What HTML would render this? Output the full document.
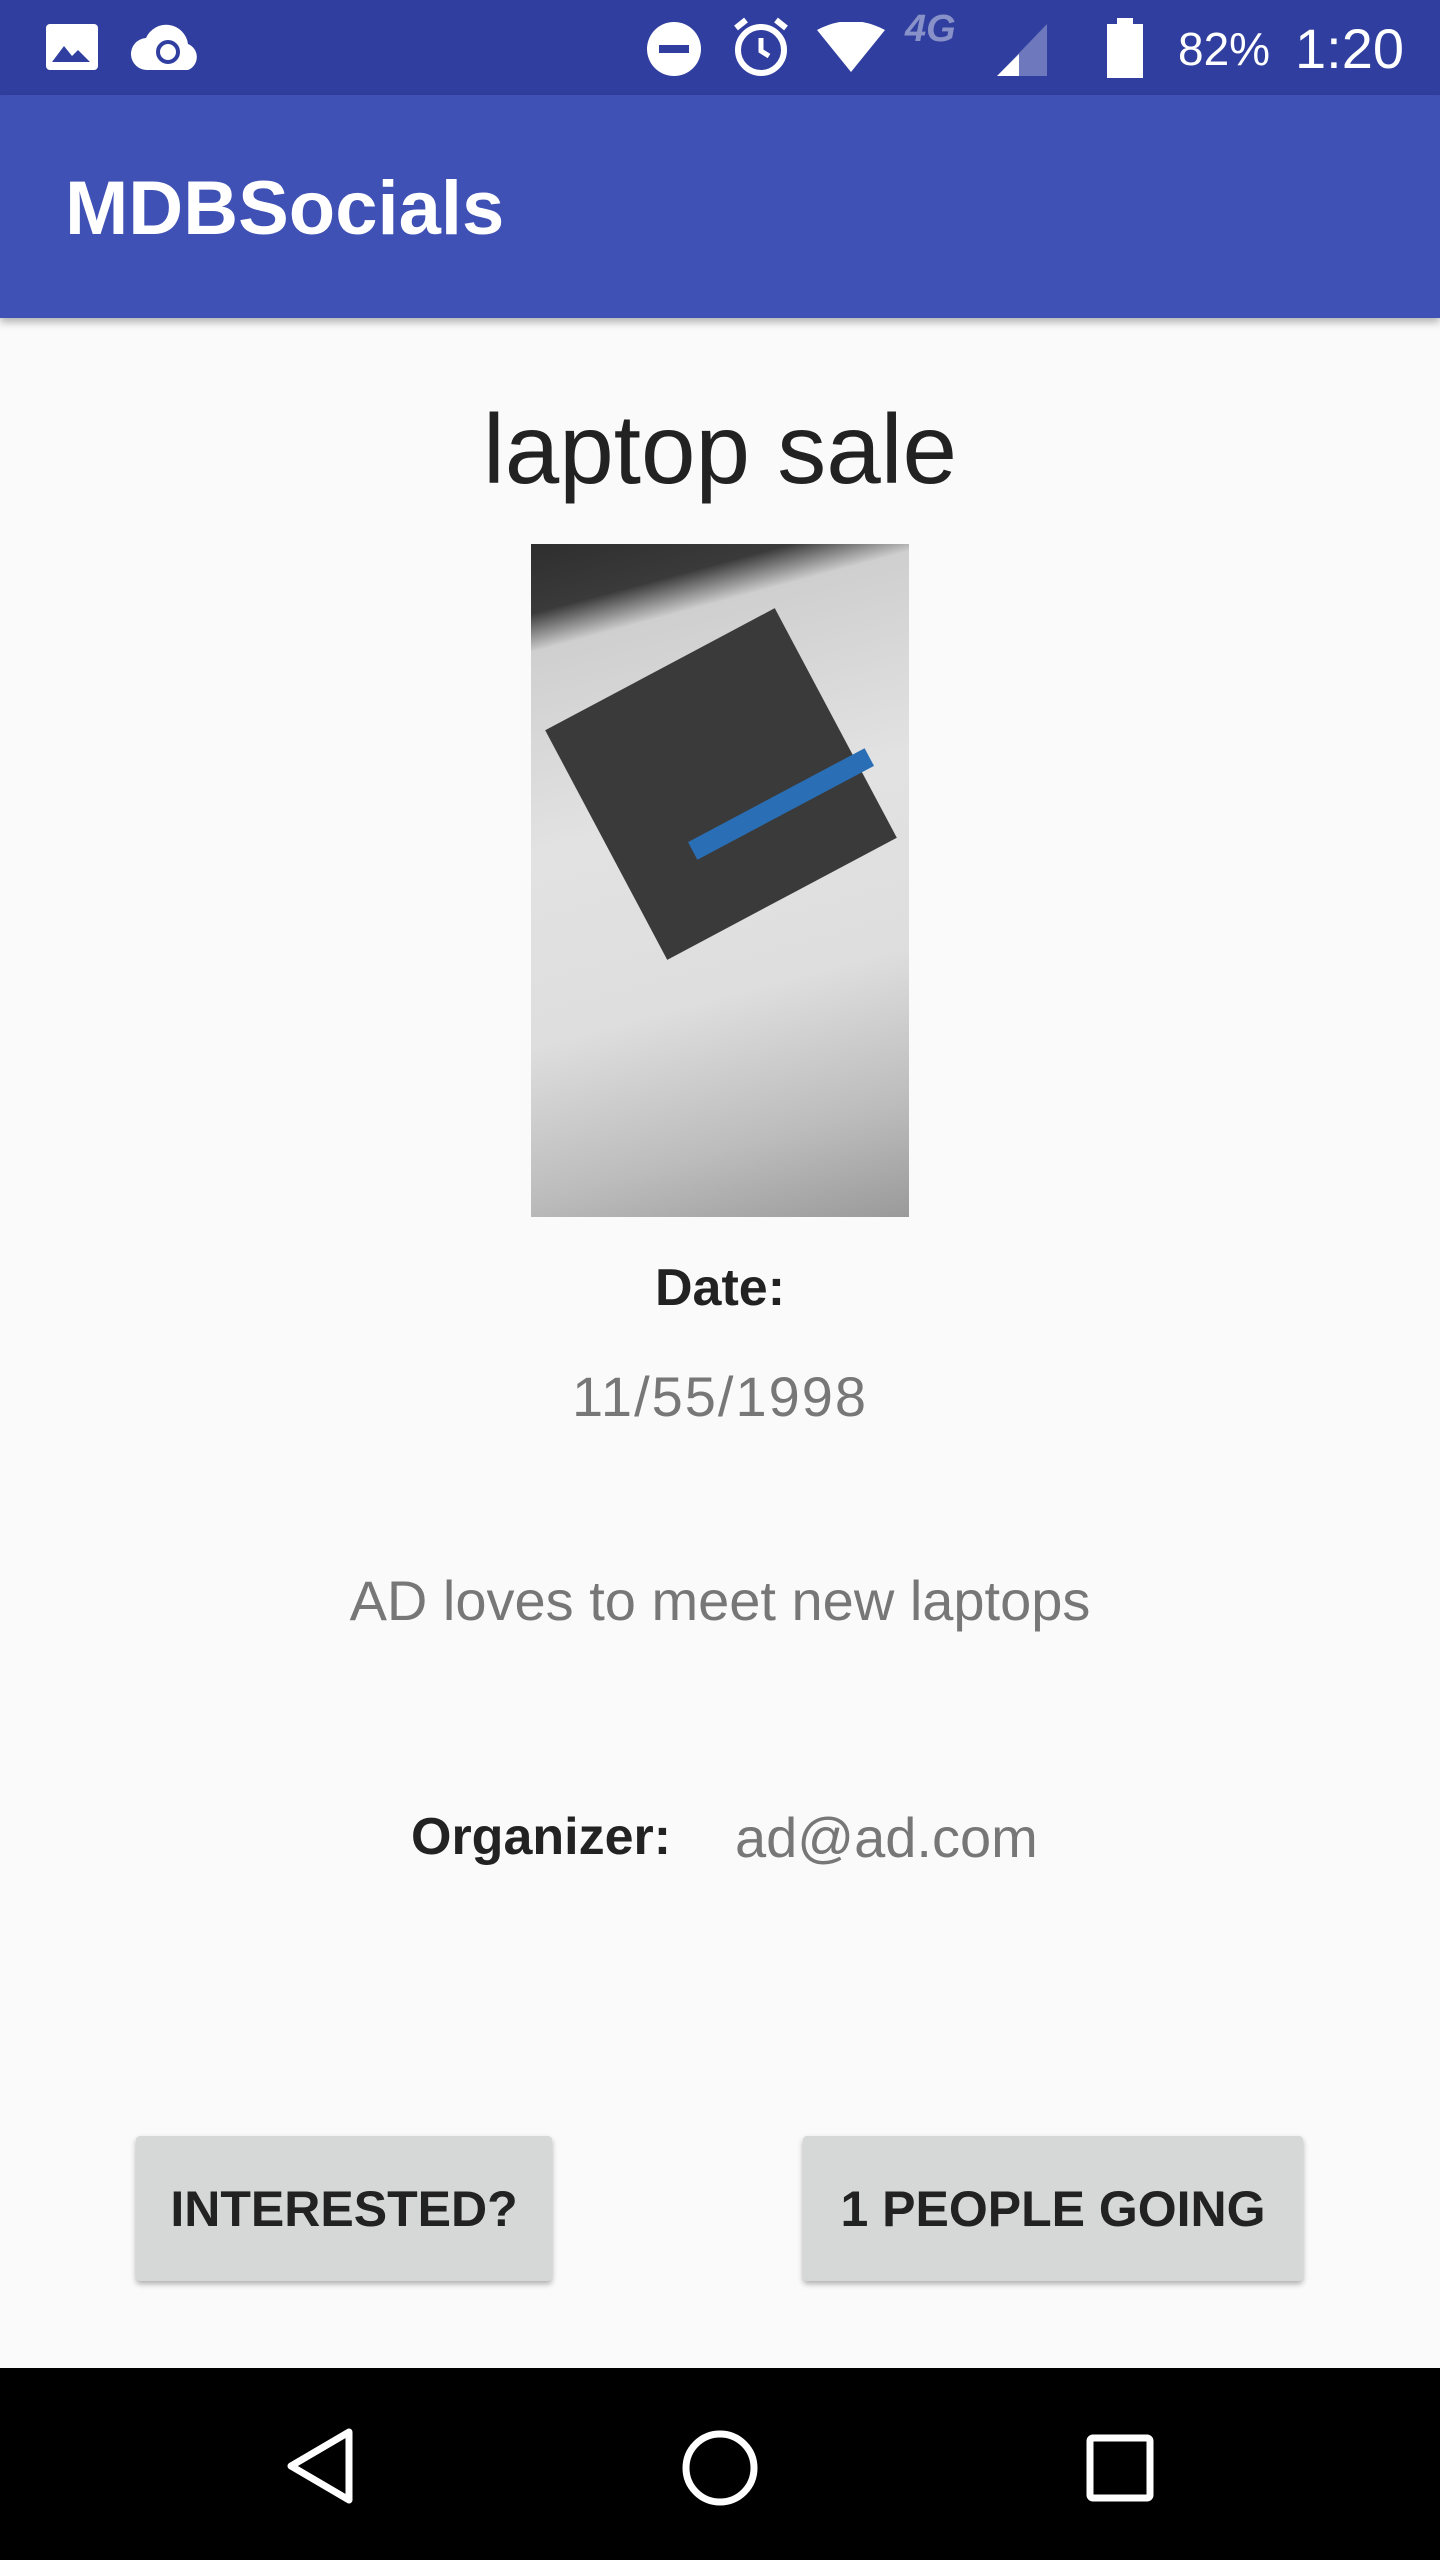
<!DOCTYPE html>
<html><head><meta charset="utf-8"><style>
*{margin:0;padding:0;box-sizing:border-box}
body{width:1440px;height:2560px;background:#fafafa;font-family:"Liberation Sans",Roboto,sans-serif;position:relative;overflow:hidden}
.abs{position:absolute}
.status{left:0;top:0;width:1440px;height:95px;background:#303f9f;color:#fff}
.appbar{left:0;top:95px;width:1440px;height:223px;background:#3f51b5;box-shadow:0 4px 8px rgba(0,0,0,.3)}
.ctr{left:0;width:1440px;text-align:center}
.btn{background:#d6d7d7;box-shadow:0 3px 6px rgba(0,0,0,.3);border-radius:4px;font-size:50px;font-weight:bold;color:#222;display:flex;align-items:center;justify-content:center}
.nav{left:0;top:2368px;width:1440px;height:192px;background:#000}
</style></head><body>
<div class="abs status">
  <svg class="abs" style="left:44px;top:22px" width="56" height="50" viewBox="0 0 28 25"><rect x="1" y="1" width="26" height="23" rx="2" fill="#fff"/><path d="M4 20l6-8 4 5 3-3 6 6z" fill="#303f9f"/></svg>
  <svg class="abs" style="left:130px;top:22px" width="74" height="52" viewBox="0 0 37 26"><path d="M9 24a8 8 0 0 1-1-16 11 11 0 0 1 21 3 7 7 0 0 1 0 13z" fill="#fff"/><circle cx="19" cy="15" r="5" fill="none" stroke="#303f9f" stroke-width="2"/></svg>
  <svg class="abs" style="left:645px;top:20px" width="58" height="58"><circle cx="29" cy="29" r="27" fill="#fff"/><rect x="14" y="25" width="30" height="8" fill="#303f9f"/></svg>
  <svg class="abs" style="left:730px;top:16px" width="62" height="62"><circle cx="31" cy="34" r="23" fill="none" stroke="#fff" stroke-width="6"/><path d="M31 22v13l8 5" stroke="#fff" stroke-width="5" fill="none"/><path d="M6 12l10-8M56 12l-10-8" stroke="#fff" stroke-width="6"/></svg>
  <svg class="abs" style="left:815px;top:22px" width="72" height="52"><path d="M2 8q34-18 68 0L36 50z" fill="#fff"/></svg>
  <div class="abs" style="left:905px;top:8px;font-size:38px;font-weight:bold;color:#8892c8;font-style:italic">4G</div>
  <svg class="abs" style="left:995px;top:20px" width="54" height="58"><path d="M2 56L52 4v52z" fill="#6d78bd"/><path d="M2 56l22-22v22z" fill="#fff"/></svg>
  <svg class="abs" style="left:1105px;top:18px" width="40" height="60"><rect x="12" y="0" width="16" height="8" fill="#fff"/><rect x="2" y="6" width="36" height="54" fill="#fff"/></svg>
  <div class="abs" style="left:1178px;top:22px;font-size:46px">82%</div>
  <div class="abs" style="left:1295px;top:16px;font-size:56px">1:20</div>
</div>
<div class="abs appbar"><div class="abs" style="left:65px;top:70px;font-size:76px;font-weight:bold;color:#fff">MDBSocials</div></div>
<div class="abs ctr" style="top:393px;font-size:98px;color:#222">laptop sale</div>
<div class="abs" style="left:531px;top:544px;width:378px;height:673px;background:linear-gradient(165deg,#2e2e2e 0%,#3a3a3a 9%,#cfcfcf 14%,#e2e2e2 40%,#dedede 65%,#bcbcbc 85%,#9a9a9a 100%);overflow:hidden">
  <div class="abs" style="left:60px;top:110px;width:260px;height:260px;background:#3a3a3a;transform:rotate(-28deg)"></div>
  <div class="abs" style="left:150px;top:250px;width:200px;height:20px;background:#2a6fb6;transform:rotate(-28deg)"></div>
</div>
<div class="abs ctr" style="top:1258px;font-size:52px;font-weight:bold;color:#222">Date:</div>
<div class="abs ctr" style="top:1364px;font-size:56px;letter-spacing:2px;color:#777">11/55/1998</div>
<div class="abs ctr" style="top:1568px;font-size:56px;color:#777">AD loves to meet new laptops</div>
<div class="abs" style="left:411px;top:1807px;font-size:52px;font-weight:bold;color:#222">Organizer:</div>
<div class="abs" style="left:735px;top:1805px;font-size:56px;color:#777">ad@ad.com</div>
<div class="abs btn" style="left:136px;top:2136px;width:416px;height:145px">INTERESTED?</div>
<div class="abs btn" style="left:803px;top:2136px;width:500px;height:145px">1 PEOPLE GOING</div>
<div class="abs nav">
  <svg class="abs" style="left:285px;top:60px" width="70" height="76"><path d="M64 4L6 38l58 34z" fill="none" stroke="#fff" stroke-width="7" stroke-linejoin="round"/></svg>
  <svg class="abs" style="left:680px;top:60px" width="80" height="80"><circle cx="40" cy="40" r="34" fill="none" stroke="#fff" stroke-width="7"/></svg>
  <svg class="abs" style="left:1086px;top:66px" width="68" height="68"><rect x="4" y="4" width="60" height="60" rx="3" fill="none" stroke="#fff" stroke-width="7"/></svg>
</div>
</body></html>
